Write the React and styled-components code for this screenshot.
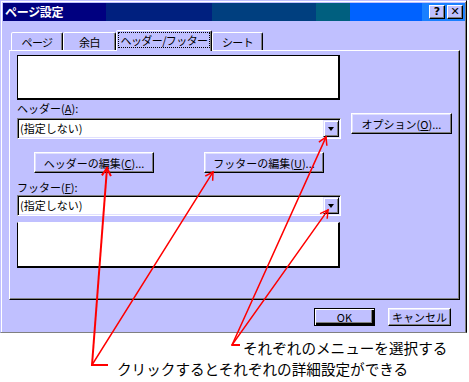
import React from 'react';
import styled, { createGlobalStyle } from 'styled-components';

const LAV = '#c0c0ff';
const LIGHT = '#e0e0ff';
const FONT = '"Noto Sans CJK JP", "Noto Sans", sans-serif';

const Global = createGlobalStyle`
  html, body { margin: 0; padding: 0; background: #fff; }
  body { font-family: ${FONT}; color: #000; }
  * { box-sizing: border-box; }
`;

const Page = styled.div`
  position: relative;
  width: 469px;
  height: 382px;
  overflow: hidden;
  background: #fff;
`;

const Window = styled.div`
  width: 467px;
  height: 333px;
  background: ${LAV};
  border: 1px solid;
  border-color: ${LAV} #000 #808080 ${LAV};
  box-shadow: inset 1px 1px 0 #fff, inset -1px 0 0 #808080;
  padding: 2px 1px 0 2px;
  display: flex;
  flex-direction: column;
`;

const TitleBar = styled.div`
  height: 18px;
  display: flex;
  align-items: center;
  justify-content: space-between;
  padding: 0 2px 0 2px;
  background: linear-gradient(
    to right,
    #000080 0 103px,
    #00207f 103px 209px,
    #003f7f 209px 313px,
    #005f7f 313px 347px,
    #0062ff 347px 419px,
    #1a80ff 419px
  );
`;

const Title = styled.span`
  color: #fff;
  font-weight: bold;
  font-size: 12px;
  line-height: 18px;
  letter-spacing: -0.3px;
`;

const CapButtons = styled.div`
  display: flex;
  gap: 2px;
`;

const CapButton = styled.div`
  width: 16px;
  height: 14px;
  background: ${LAV};
  border: 1px solid;
  border-color: #fff #000 #000 #fff;
  box-shadow: inset -1px -1px 0 #808080;
  display: flex;
  align-items: center;
  justify-content: center;
  font-family: "DejaVu Sans", sans-serif;
  font-weight: bold;
  font-size: 11px;
  line-height: 1;
  padding-bottom: 1px;
`;

const TabRow = styled.div`
  margin-top: 9px;
  padding-left: 8px;
  height: 20px;
  display: flex;
  align-items: flex-end;
`;

const Tab = styled.div`
  position: relative;
  z-index: ${(p) => (p.$active ? 1 : 0)};
  width: ${(p) => p.$w}px;
  height: ${(p) => (p.$active ? 21 : 18)}px;
  margin-bottom: ${(p) => (p.$active ? -1 : 0)}px;
  background: ${LAV};
  border: 1px solid;
  border-bottom: none;
  border-color: #fff #000 transparent #fff;
  border-radius: 2px 2px 0 0;
  box-shadow: inset -1px 0 0 #808080;
  display: flex;
  align-items: center;
  justify-content: center;
  font-size: 11px;
  letter-spacing: -0.6px;
  padding-bottom: ${(p) => (p.$active ? 2 : 0)}px;
`;

const Focus = styled.span`
  outline: 1px dotted #000;
  padding: 0 2px;
  line-height: 14px;
`;

const Panel = styled.div`
  margin-left: 6px;
  width: 451px;
  height: 250px;
  border: 1px solid;
  border-color: #fff #000 #000 #fff;
  box-shadow: inset -1px -1px 0 #808080;
  padding: 4px 0 0 7px;
  display: flex;
  gap: 10px;
`;

const LeftCol = styled.div`
  width: 324px;
  display: flex;
  flex-direction: column;
`;

const RightCol = styled.div`
  padding-top: 58px;
`;

const Preview = styled.div`
  width: 323px;
  height: ${(p) => p.$h}px;
  margin-top: ${(p) => p.$mt || 0}px;
  background: #fff;
  border-style: solid;
  border-color: ${(p) => (p.$noTop ? '#fff' : '#000')} #000 #000 #000;
  border-width: 1px 2px 2px 1px;
`;

const Label = styled.div`
  height: ${(p) => p.$h}px;
  padding-top: ${(p) => p.$pt}px;
  font-size: 11px;
  line-height: 16px;
`;

const Ul = styled.span`
  text-decoration: underline;
  text-underline-offset: 1px;
`;

const Combo = styled.div`
  width: 324px;
  height: 21px;
  background: #fff;
  border: 1px solid;
  border-color: #808080 #fff #fff #808080;
  box-shadow: inset 1px 1px 0 #000, inset -1px -1px 0 ${LIGHT};
  padding: 1px 1px 1px 2px;
  display: flex;
  align-items: center;
`;

const ComboText = styled.span`
  flex: 1;
  font-size: 11px;
  line-height: 17px;
`;

const DropBtn = styled.div`
  width: 16px;
  height: 17px;
  background: ${LAV};
  border: 1px solid;
  border-color: ${LIGHT} #000 #000 ${LIGHT};
  box-shadow: inset 1px 1px 0 #fff, inset -1px -1px 0 #808080;
  display: flex;
  align-items: center;
  justify-content: center;
`;

const DownArrow = styled.span`
  width: 0;
  height: 0;
  border-left: 3.5px solid transparent;
  border-right: 3.5px solid transparent;
  border-top: 4px solid #000;
  margin-top: 1px;
`;

const EditRow = styled.div`
  margin-top: 13px;
  padding-left: 17px;
  display: flex;
  gap: 50px;
`;

const Button = styled.div`
  width: ${(p) => p.$w}px;
  height: ${(p) => p.$h || 21}px;
  background: ${LAV};
  border: 1px solid;
  border-color: #fff #000 #000 #fff;
  box-shadow: inset -1px -1px 0 #808080, inset 1px 1px 0 ${LIGHT};
  display: flex;
  align-items: center;
  justify-content: center;
  font-size: 11px;
  line-height: 14px;
  ${(p) =>
    p.$default &&
    `
    border-color: #000;
    box-shadow: inset 1px 1px 0 #fff, inset -2px -2px 0 #000, inset -3px -3px 0 #808080;
  `}
`;

const Footer = styled.div`
  margin-top: 8px;
  padding-right: 14px;
  display: flex;
  justify-content: flex-end;
  gap: 13px;
`;

const Notes = styled.div`
  margin-top: 4px;
  display: flex;
  flex-direction: column;
`;

const Note = styled.div`
  padding-left: ${(p) => p.$x}px;
  font-size: 14.6px;
  line-height: 21px;
  white-space: nowrap;
`;

const Overlay = styled.svg`
  position: absolute;
  left: 0;
  top: 0;
  pointer-events: none;
`;

function Arrow({ from, to, w = 1.6 }) {
  const dx = to[0] - from[0];
  const dy = to[1] - from[1];
  const len = Math.hypot(dx, dy);
  const ux = dx / len;
  const uy = dy / len;
  const L = 8;
  const a = Math.PI / 6;
  const arm = (s) => {
    const c = Math.cos(s * a);
    const sn = Math.sin(s * a);
    const rx = ux * c - uy * sn;
    const ry = ux * sn + uy * c;
    return [to[0] - rx * L, to[1] - ry * L];
  };
  const p1 = arm(1);
  const p2 = arm(-1);
  return (
    <g stroke="#ff0000" strokeWidth={w} fill="none" strokeLinecap="square">
      <line x1={from[0]} y1={from[1]} x2={to[0]} y2={to[1]} />
      <polyline points={`${p1[0]},${p1[1]} ${to[0]},${to[1]} ${p2[0]},${p2[1]}`} />
    </g>
  );
}

export default function App() {
  return (
    <Page>
      <Global />
      <Window>
        <TitleBar>
          <Title>ページ設定</Title>
          <CapButtons>
            <CapButton>?</CapButton>
            <CapButton>✕</CapButton>
          </CapButtons>
        </TitleBar>
        <TabRow>
          <Tab $w={52}>ページ</Tab>
          <Tab $w={53}>余白</Tab>
          <Tab $w={96} $active>
            <Focus>ヘッダー/フッター</Focus>
          </Tab>
          <Tab $w={51}>シート</Tab>
        </TabRow>
        <Panel>
          <LeftCol>
            <Preview $h={45} />
            <Label $h={18} $pt={0}>
              ヘッダー(<Ul>A</Ul>):
            </Label>
            <Combo>
              <ComboText>(指定しない)</ComboText>
              <DropBtn>
                <DownArrow />
              </DropBtn>
            </Combo>
            <EditRow>
              <Button $w={120}>
                ヘッダーの編集(<Ul>C</Ul>)...
              </Button>
              <Button $w={120}>
                フッターの編集(<Ul>U</Ul>)...
              </Button>
            </EditRow>
            <Label $h={22} $pt={6}>
              フッター(<Ul>F</Ul>):
            </Label>
            <Combo>
              <ComboText>(指定しない)</ComboText>
              <DropBtn>
                <DownArrow />
              </DropBtn>
            </Combo>
            <Preview $h={46} $mt={6} $noTop />
          </LeftCol>
          <RightCol>
            <Button $w={101}>
              オプション(<Ul>O</Ul>)...
            </Button>
          </RightCol>
        </Panel>
        <Footer>
          <Button $w={61} $h={18} $default>
            OK
          </Button>
          <Button $w={63} $h={18}>
            キャンセル
          </Button>
        </Footer>
      </Window>
      <Notes>
        <Note $x={243}>それぞれのメニューを選択する</Note>
        <Note $x={117}>クリックするとそれぞれの詳細設定ができる</Note>
      </Notes>
      <Overlay width="469" height="382" viewBox="0 0 469 382">
        <g stroke="#ff0000" strokeWidth="2">
          <line x1="92" y1="365" x2="108" y2="365" />
          <line x1="232" y1="345" x2="240" y2="345" />
        </g>
        <Arrow from={[92, 365]} to={[107, 168]} w={2} />
        <Arrow from={[92, 365]} to={[213, 172]} w={1.5} />
        <Arrow from={[232, 345]} to={[326, 137]} w={1.5} />
        <Arrow from={[232, 345]} to={[328, 210]} w={1.5} />
      </Overlay>
    </Page>
  );
}
